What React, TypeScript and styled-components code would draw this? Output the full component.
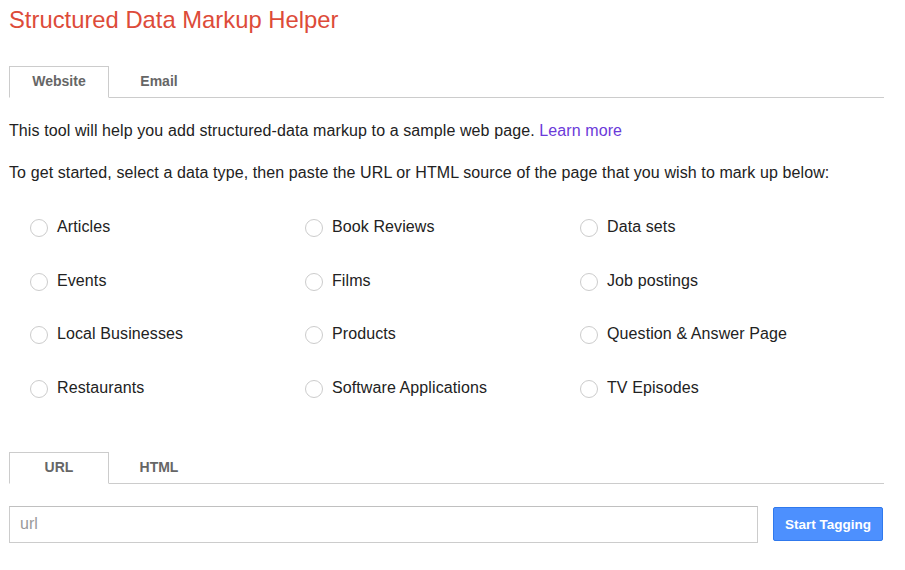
import { FunctionComponent } from "react";
import styled, { createGlobalStyle } from "styled-components";

const dataTypes = [
  "Articles",
  "Book Reviews",
  "Data sets",
  "Events",
  "Films",
  "Job postings",
  "Local Businesses",
  "Products",
  "Question & Answer Page",
  "Restaurants",
  "Software Applications",
  "TV Episodes",
];

type TabBarProps = {
  tabs: string[];
  active: number;
};

const TabBar: FunctionComponent<TabBarProps> = ({ tabs, active }) => {
  return (
    <Tabs>
      {tabs.map((tab, i) => (
        <Tab key={tab} $active={i === active}>
          {tab}
        </Tab>
      ))}
    </Tabs>
  );
};

export default function App() {
  return (
    <>
      <GlobalStyle />
      <Page>
        <Title>Structured Data Markup Helper</Title>
        <TabBar tabs={["Website", "Email"]} active={0} />
        <Intro>
          This tool will help you add structured-data markup to a sample web
          page. <LearnMore href="#">Learn more</LearnMore>
        </Intro>
        <Intro>
          To get started, select a data type, then paste the URL or HTML source
          of the page that you wish to mark up below:
        </Intro>
        <TypeGrid>
          {dataTypes.map((type) => (
            <TypeOption key={type}>
              <Radio type="radio" name="dataType" />
              {type}
            </TypeOption>
          ))}
        </TypeGrid>
        <TabBar tabs={["URL", "HTML"]} active={0} />
        <SourceRow>
          <UrlInput placeholder="url" />
          <StartButton>Start Tagging</StartButton>
        </SourceRow>
      </Page>
    </>
  );
}

const GlobalStyle = createGlobalStyle`
  body {
    margin: 0;
    background: #fff;
    font-family: Arial, "Liberation Sans", sans-serif;
    color: #222;
  }
`;

const Page = styled.div`
  width: 875px;
  padding: 6px 0 0 9px;
`;

const Title = styled.h1`
  margin: 0 0 32px;
  font-size: 23.8px;
  font-weight: normal;
  line-height: 28px;
  color: #dd4b39;
`;

const Tabs = styled.div`
  display: flex;
  align-items: flex-start;
  border-bottom: 1px solid #ccc;
  height: 31px;
`;

const Tab = styled.div<{ $active: boolean }>`
  box-sizing: border-box;
  width: 100px;
  height: ${({ $active }) => ($active ? "32px" : "31px")};
  display: flex;
  align-items: center;
  justify-content: center;
  padding-bottom: 2px;
  font-size: 14px;
  font-weight: bold;
  color: #666;
  border: 1px solid ${({ $active }) => ($active ? "#ccc" : "transparent")};
  border-bottom: ${({ $active }) => ($active ? "1px solid #fff" : "none")};
  background: ${({ $active }) => ($active ? "#fff" : "transparent")};
`;

const Intro = styled.p`
  margin: 23px 0 0;
  font-size: 16px;
  line-height: 19px;
  letter-spacing: 0.1px;
  color: #222;
`;

const LearnMore = styled.a`
  color: #6b3ad9;
  text-decoration: none;
`;

const TypeGrid = styled.div`
  display: grid;
  grid-template-columns: repeat(3, 275px);
  grid-auto-rows: 53.7px;
  padding: 32px 0 23px 21px;
`;

const TypeOption = styled.label`
  display: flex;
  align-items: center;
  height: 26px;
  font-size: 16px;
  letter-spacing: 0.1px;
  color: #222;
`;

const Radio = styled.input`
  appearance: none;
  box-sizing: border-box;
  width: 18px;
  height: 18px;
  margin: 2px 9px 0 0;
  border: 1px solid #ccc;
  border-radius: 50%;
  background: #fff;
`;

const SourceRow = styled.div`
  display: flex;
  align-items: center;
  gap: 15px;
  margin-top: 22px;
`;

const UrlInput = styled.input`
  box-sizing: border-box;
  width: 749px;
  height: 37px;
  padding: 0 10px;
  border: 1px solid #ccc;
  border-top-color: #c0c0c0;
  font-family: Arial, "Liberation Sans", sans-serif;
  font-size: 16px;
  color: #222;
  outline: none;

  &::placeholder {
    color: #999;
  }
`;

const StartButton = styled.button`
  box-sizing: border-box;
  width: 110px;
  height: 34px;
  border: 1px solid #3079ed;
  border-radius: 2px;
  background: #4d90fe;
  color: #fff;
  font-family: Arial, "Liberation Sans", sans-serif;
  font-size: 13.5px;
  font-weight: bold;
`;
